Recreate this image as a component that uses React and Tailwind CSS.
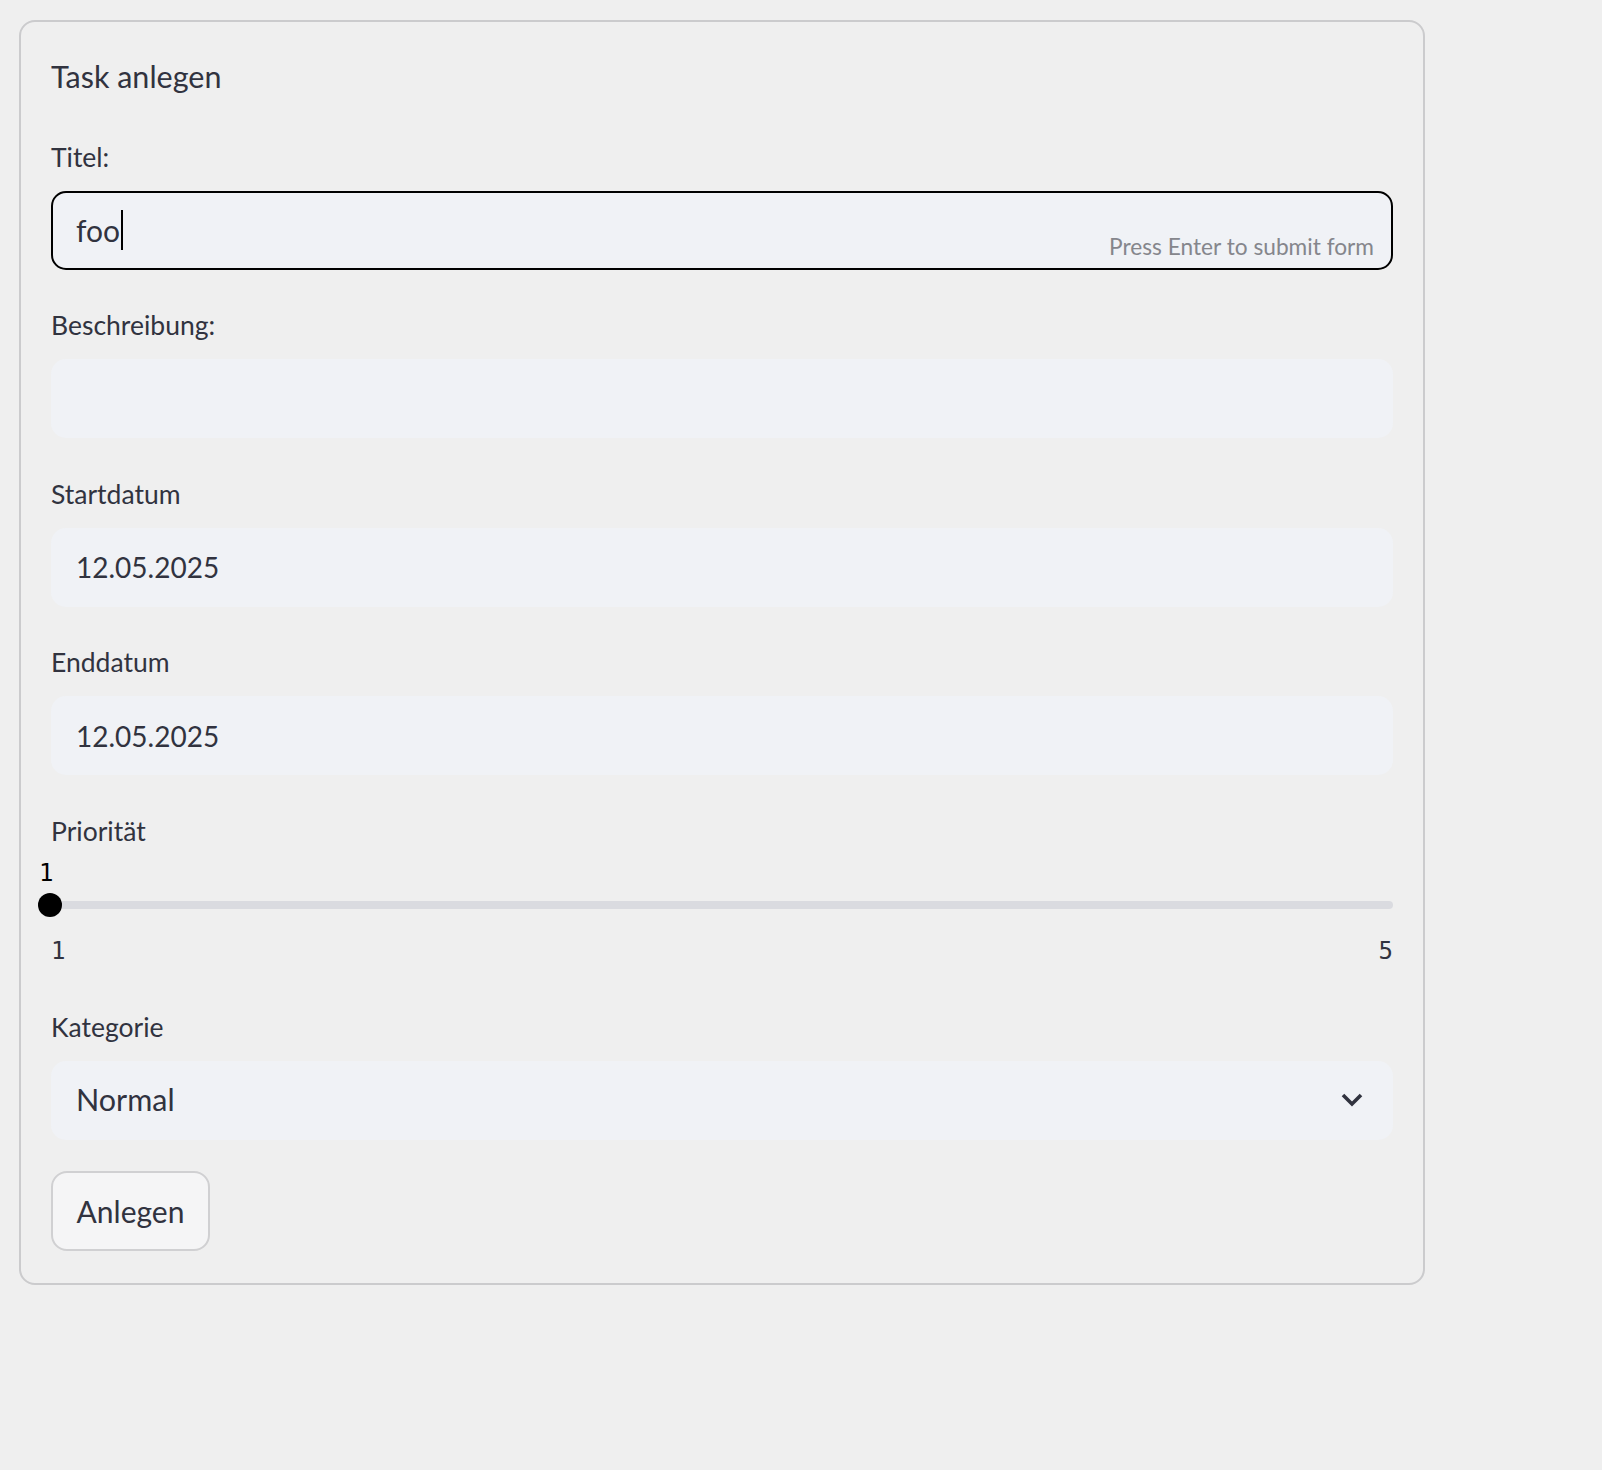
import React from "react";

const font = { fontFamily: "Lato, 'Noto Sans', sans-serif" };

const Label = ({ children }) => (
	<div className="h-[50px] mb-[8px] flex items-center text-[26.5px] text-[#31333f]">
		{children}
	</div>
);

const Field = ({ value, focused, hint, size = "text-[28px]" }) => (
	<div
		className={
			"relative h-[79px] rounded-[15px] bg-[#f0f2f6] flex items-center text-[#31333f] " +
			size +
			(focused ? " border-2 border-black pl-[23px]" : " pl-[25px]")
		}
	>
		<span>{value}</span>
		{focused && <span className="w-[1.5px] h-[40px] bg-black ml-[1px]" />}
		{hint && (
			<span className="absolute right-[17px] bottom-[3px] text-[22.7px] text-[#85868c]">
				{hint}
			</span>
		)}
	</div>
);

const TaskForm = () => {
	return (
		<div className="min-h-[1470px] bg-[#efefef] pt-[20px] pl-[19px]" style={font}>
			<div className="w-[1406px] border-2 border-[#cbcbcd] rounded-[16px] px-[30px] pt-[30px] pb-[32px] flex flex-col gap-[31.5px]">
				{/* Header */}
				<div className="h-[49px] flex items-center text-[30.5px] text-[#31333f]">Task anlegen</div>

				<div>
					<Label>Titel:</Label>
					<Field value="foo" focused size="text-[30px]" hint="Press Enter to submit form" />
				</div>

				<div>
					<Label>Beschreibung:</Label>
					<Field value="" />
				</div>

				<div>
					<Label>Startdatum</Label>
					<Field value="12.05.2025" />
				</div>

				<div>
					<Label>Enddatum</Label>
					<Field value="12.05.2025" />
				</div>

				{/* Slider */}
				<div>
					<div className="h-[50px] flex items-center text-[26.5px] text-[#31333f]">Priorität</div>
					<div className="h-[30px] relative">
						<span className="absolute left-[-12px] top-[4px] text-[24px] leading-[24px] text-black font-['DejaVu_Sans_Mono',monospace]">
							1
						</span>
					</div>
					<div className="h-[36px] flex items-center">
						<div className="relative w-full h-[8px] rounded-full bg-[#dadbe0]">
							<div className="absolute left-[-13px] top-[-8px] w-[24px] h-[24px] rounded-full bg-black" />
						</div>
					</div>
					<div className="h-[48.5px] pt-[9px] flex justify-between items-center text-[24px] text-[#31333f] font-['DejaVu_Sans_Mono',monospace]">
						<span>1</span>
						<span>5</span>
					</div>
				</div>

				<div>
					<Label>Kategorie</Label>
					<div className="h-[79px] rounded-[15px] bg-[#f0f2f6] flex items-center justify-between pl-[25px] pr-[30px] text-[30.5px] text-[#31333f]">
						<span>Normal</span>
						<svg width="22" height="14" viewBox="0 0 22 14" fill="none">
							<path d="M2 2 L11 11 L20 2" stroke="#31333f" strokeWidth="3.6" />
						</svg>
					</div>
				</div>

				{/* Submit */}
				<div>
					<button className="h-[80px] w-[159px] rounded-[16px] border-2 border-[#d0d0d2] bg-[#f5f5f6] text-[30px] text-[#31333f]">
						Anlegen
					</button>
				</div>
			</div>
		</div>
	);
};

export default TaskForm;
